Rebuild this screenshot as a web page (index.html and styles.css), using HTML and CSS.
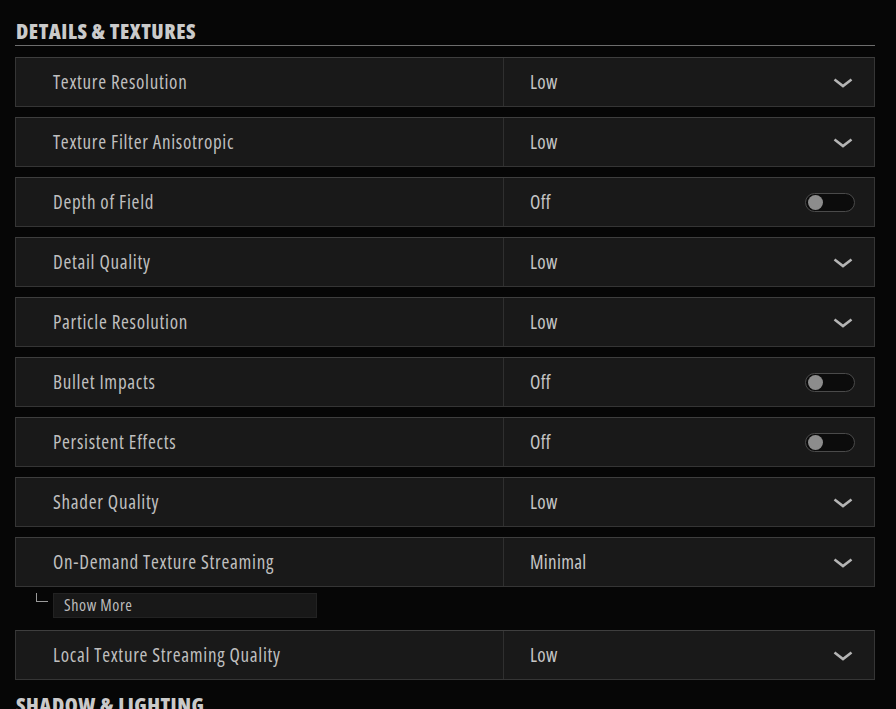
FILE: index.html
```html
<!DOCTYPE html>
<html>
<head>
<meta charset="utf-8">
<link rel="stylesheet" href="styles.css">
</head>
<body>
<div class="page">
  <h2 class="section-title">DETAILS &amp; TEXTURES</h2>
  <div class="rows">
    <div class="row"><div class="label">Texture Resolution</div><div class="value"><span>Low</span><span class="chev"><svg width="20" height="10" viewBox="0 0 20 10"><path d="M1.5 1.5 L10 8 L18.5 1.5" fill="none" stroke="#b4b4b4" stroke-width="2.6"/></svg></span></div></div>
    <div class="row"><div class="label">Texture Filter Anisotropic</div><div class="value"><span>Low</span><span class="chev"><svg width="20" height="10" viewBox="0 0 20 10"><path d="M1.5 1.5 L10 8 L18.5 1.5" fill="none" stroke="#b4b4b4" stroke-width="2.6"/></svg></span></div></div>
    <div class="row"><div class="label">Depth of Field</div><div class="value"><span>Off</span><span class="toggle"><span class="knob"></span></span></div></div>
    <div class="row"><div class="label">Detail Quality</div><div class="value"><span>Low</span><span class="chev"><svg width="20" height="10" viewBox="0 0 20 10"><path d="M1.5 1.5 L10 8 L18.5 1.5" fill="none" stroke="#b4b4b4" stroke-width="2.6"/></svg></span></div></div>
    <div class="row"><div class="label">Particle Resolution</div><div class="value"><span>Low</span><span class="chev"><svg width="20" height="10" viewBox="0 0 20 10"><path d="M1.5 1.5 L10 8 L18.5 1.5" fill="none" stroke="#b4b4b4" stroke-width="2.6"/></svg></span></div></div>
    <div class="row"><div class="label">Bullet Impacts</div><div class="value"><span>Off</span><span class="toggle"><span class="knob"></span></span></div></div>
    <div class="row"><div class="label">Persistent Effects</div><div class="value"><span>Off</span><span class="toggle"><span class="knob"></span></span></div></div>
    <div class="row"><div class="label">Shader Quality</div><div class="value"><span>Low</span><span class="chev"><svg width="20" height="10" viewBox="0 0 20 10"><path d="M1.5 1.5 L10 8 L18.5 1.5" fill="none" stroke="#b4b4b4" stroke-width="2.6"/></svg></span></div></div>
    <div class="row"><div class="label">On-Demand Texture Streaming</div><div class="value"><span>Minimal</span><span class="chev"><svg width="20" height="10" viewBox="0 0 20 10"><path d="M1.5 1.5 L10 8 L18.5 1.5" fill="none" stroke="#b4b4b4" stroke-width="2.6"/></svg></span></div></div>
  </div>
  <div class="show-more-line">
    <span class="corner"></span>
    <div class="show-more">Show More</div>
  </div>
  <div class="rows">
    <div class="row"><div class="label">Local Texture Streaming Quality</div><div class="value"><span>Low</span><span class="chev"><svg width="20" height="10" viewBox="0 0 20 10"><path d="M1.5 1.5 L10 8 L18.5 1.5" fill="none" stroke="#b4b4b4" stroke-width="2.6"/></svg></span></div></div>
  </div>
  <h2 class="section-title next">SHADOW &amp; LIGHTING</h2>
</div>
</body>
</html>
```
FILE: styles.css
```css
html, body {
  margin: 0;
  padding: 0;
  background: #060606;
  height: 100%;
  overflow: hidden;
}
.page {
  width: 860px;
  padding: 18px 0 0 15px;
  font-family: "Open Sans", "DejaVu Sans Condensed", sans-serif;
  font-stretch: 75%;
  color: #c2c2c2;
}
.section-title {
  margin: 0;
  font-size: 21px;
  font-weight: 800;
  line-height: 26px;
  letter-spacing: 0.5px;
  color: #cacaca;
  border-bottom: 1px solid #6d6d6d;
  padding-left: 1px;
  padding-bottom: 1px;
}
.section-title.next {
  margin-top: 12px;
}
.rows {
  display: flex;
  flex-direction: column;
  gap: 10px;
  margin-top: 11px;
}
.row {
  height: 48px;
  display: flex;
  background: #191919;
  border: 1px solid #353535;
  border-top-color: #3e3e3e;
  box-sizing: content-box;
}
.label {
  width: 450px;
  padding-left: 37px;
  border-right: 1px solid #2f2f2f;
  display: flex;
  align-items: center;
  font-size: 19px;
  font-weight: 500;
  letter-spacing: 0.7px;
  color: #bfbfbf;
}
.value {
  flex: 1;
  display: flex;
  align-items: center;
  justify-content: space-between;
  padding-left: 26px;
  padding-right: 21px;
  font-size: 19px;
  font-weight: 500;
  letter-spacing: 0.3px;
  color: #c6c6c6;
}
.chev {
  display: flex;
  margin-top: 1px;
}
.value .toggle {
  margin-right: -2px;
}
.toggle {
  width: 46px;
  height: 17px;
  border: 1px solid #4a4a4a;
  border-radius: 10px;
  background: #0c0c0c;
  display: flex;
  align-items: center;
  padding-left: 2px;
  box-sizing: content-box;
}
.knob {
  width: 15px;
  height: 15px;
  border-radius: 50%;
  background: #8c8c8c;
}
.show-more-line {
  display: flex;
  align-items: flex-start;
  margin-top: 6px;
  padding-left: 21px;
}
.corner {
  width: 11px;
  height: 8px;
  border-left: 1px solid #9a9a9a;
  border-bottom: 1px solid #9a9a9a;
  margin-right: 5px;
}
.show-more {
  width: 252px;
  height: 23px;
  background: #181818;
  border: 1px solid #222;
  padding-left: 10px;
  font-size: 16px;
  font-weight: 500;
  letter-spacing: 0.6px;
  line-height: 23px;
  color: #bdbdbd;
}
.show-more-line + .rows {
  margin-top: 12px;
}
```
